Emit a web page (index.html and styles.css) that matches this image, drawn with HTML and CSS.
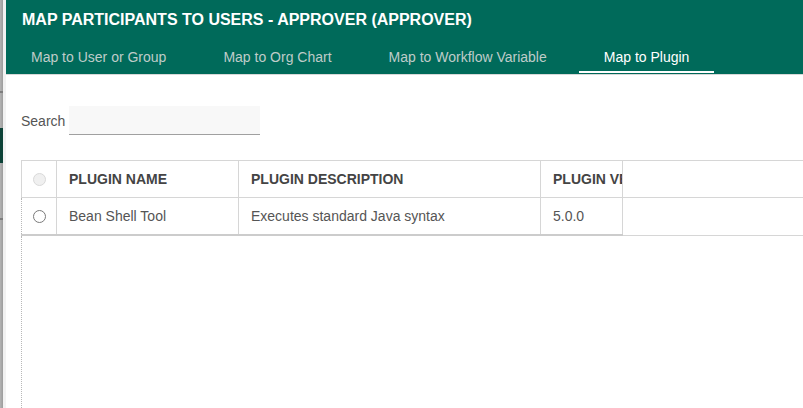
FILE: index.html
```html
<!DOCTYPE html>
<html lang="en">
<head>
<meta charset="utf-8">
<title>Map Participants to Users</title>
<link rel="stylesheet" href="styles.css">
</head>
<body>
<div class="page">
  <div class="strip">
    <div class="strip-a"></div>
    <div class="strip-line"></div>
    <div class="strip-b"></div>
    <div class="strip-dark"></div>
    <div class="strip-c"></div>
    <div class="strip-line"></div>
    <div class="strip-d"></div>
  </div>
  <div class="dialog">
    <div class="header">
      <div class="title">MAP PARTICIPANTS TO USERS - APPROVER (APPROVER)</div>
      <div class="tabs">
        <div class="tab">Map to User or Group</div>
        <div class="tab">Map to Org Chart</div>
        <div class="tab">Map to Workflow Variable</div>
        <div class="tab active">Map to Plugin</div>
      </div>
    </div>
    <div class="body">
      <div class="search-row">
        <label class="search-label" for="q">Search</label> <input id="q" class="search-input" type="text">
      </div>
      <table class="grid">
        <colgroup>
          <col class="w-sel">
          <col class="w-name">
          <col class="w-desc">
          <col class="w-ver">
          <col>
        </colgroup>
        <thead>
          <tr>
            <th class="c-sel"><span class="radio disabled"></span></th>
            <th>PLUGIN NAME</th>
            <th>PLUGIN DESCRIPTION</th>
            <th class="c-ver">PLUGIN VERSION</th>
            <th class="c-fill"></th>
          </tr>
        </thead>
        <tbody>
          <tr>
            <td class="c-sel first"><span class="radio"></span></td>
            <td>Bean Shell Tool</td>
            <td>Executes standard Java syntax</td>
            <td class="c-ver">5.0.0</td>
            <td class="c-fill"></td>
          </tr>
        </tbody>
      </table>
      <div class="filler"></div>
    </div>
  </div>
</div>
</body>
</html>
```
FILE: styles.css
```css
html, body {
  margin: 0;
  padding: 0;
  height: 100%;
  overflow: hidden;
  background: #ffffff;
}
body {
  font-family: "Liberation Sans", Arial, sans-serif;
}
.page {
  display: flex;
  height: 408px;
}
.strip {
  width: 6px;
  flex: none;
  display: flex;
  flex-direction: column;
  background: #f2f2f2;
}
.strip > div {
  width: 3px;
  background: linear-gradient(to right, #b4b4b4, #9c9c9c);
}
.strip-a { height: 91px; }
.strip .strip-line { height: 2px; background: #7d7d7d; }
.strip-b { height: 35px; }
.strip .strip-dark { height: 35px; background: #0c4237; }
.strip-c { height: 55px; }
.strip-d { flex: 1; }

.dialog {
  flex: 1;
  min-width: 0;
  display: flex;
  flex-direction: column;
  overflow: hidden;
}
.header {
  background: #006a5a;
  padding-bottom: 1px;
  border-bottom: 1px solid #d8d8d8;
}
.title {
  padding: 9px 16px 0;
  line-height: 22px;
  font-size: 16px;
  font-weight: bold;
  color: #ffffff;
  white-space: nowrap;
}
.tabs {
  display: flex;
  gap: 7px;
  margin-top: 12px;
}
.tab {
  padding: 0 25px;
  line-height: 28px;
  font-size: 14px;
  color: #bfccc9;
  border-bottom: 2px solid transparent;
  white-space: nowrap;
}
.tab.active {
  color: #ffffff;
  border-bottom-color: #ffffff;
}

.body {
  flex: 1;
  display: flex;
  flex-direction: column;
  padding: 0 0 0 15px;
}
.search-row {
  display: flex;
  align-items: center;
  gap: 4px;
  margin-top: 31px;
}
.search-label {
  font-size: 14px;
  color: #555555;
}
.search-input {
  width: 191px;
  height: 28px;
  box-sizing: content-box;
  margin: 0;
  padding: 0;
  border: 0;
  border-bottom: 1px solid #a0a0a0;
  background: #f8f8f8;
  outline: none;
}
.grid {
  margin-top: 25px;
  border-collapse: collapse;
  table-layout: fixed;
  width: 800px;
  font-size: 14px;
}
.w-sel { width: 35px; }
.w-name { width: 182px; }
.w-desc { width: 302px; }
.w-ver { width: 82px; }
.grid th, .grid td {
  padding: 0 0 0 12px;
  text-align: left;
  white-space: nowrap;
  overflow: hidden;
  border: 1px solid #d6d6d6;
}
.grid th {
  height: 36px;
  font-weight: bold;
  color: #444444;
}
.grid td {
  height: 36px;
  color: #555555;
  border-bottom: 2px solid #cccccc;
}
.grid td.c-fill {
  border-bottom: 1px solid #d6d6d6;
}
.grid td.first {
  border-left: 1px dotted #b8b8b8;
}
.grid .c-sel { padding: 0 0 0 11px; }
.grid .c-fill { border-right: 0; }
.radio {
  display: block;
  width: 11px;
  height: 11px;
  border-radius: 50%;
  border: 1px solid #7a7a7a;
  background: #ffffff;
}
.radio.disabled {
  border-color: #d9d9d9;
  background: #f0f0f0;
}
.filler {
  flex: 1;
  width: 0;
  border-left: 1px dotted #b8b8b8;
}
```
